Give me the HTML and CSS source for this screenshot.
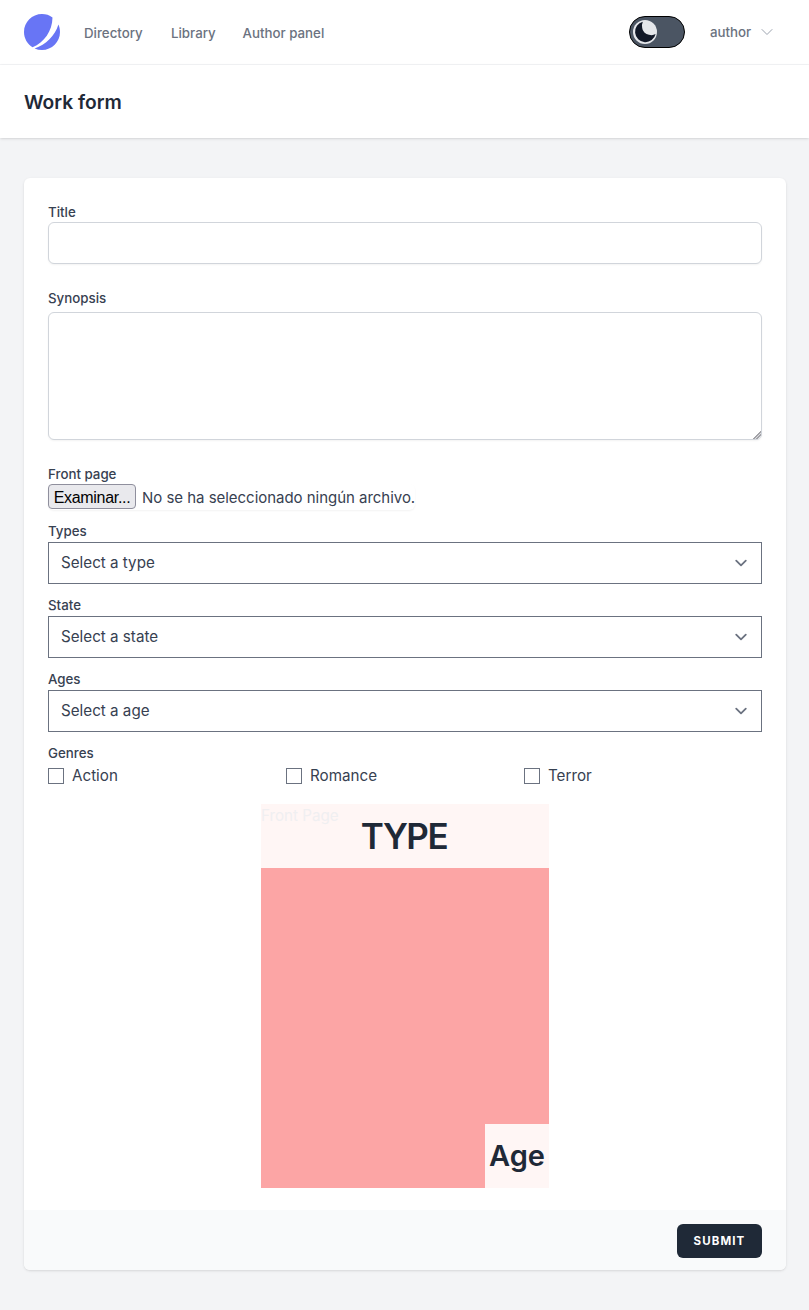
FILE: index.html
```html
<!DOCTYPE html>
<html lang="en">
<head>
<meta charset="utf-8">
<title>Work form</title>
<link rel="stylesheet" href="styles.css">
</head>
<body>
<nav class="nav">
  <svg class="logo" viewBox="0 0 48 48" fill="#6875f5"><path d="M11.395 44.428C4.557 40.198 0 32.632 0 24 0 10.745 10.745 0 24 0a23.891 23.891 0 0113.997 4.502c-.2 17.907-11.097 33.245-26.602 39.926z"/><path d="M14.134 45.885A23.914 23.914 0 0024 48c13.255 0 24-10.745 24-24 0-3.516-.756-6.856-2.115-9.866-4.659 15.143-16.608 27.092-31.75 31.751z"/></svg>
  <div class="links"><a class="link-directory">Directory</a><a class="link-library">Library</a><a class="link-author">Author panel</a></div>
  <button class="toggle" aria-label="Dark mode"><svg class="moon" viewBox="0 0 24 24"><circle cx="12" cy="12" r="12" fill="#e5e7eb"/><path d="M9.800 1.700A10.400 10.400 0 1 0 22.600 14.100A8.400 8.400 0 0 1 16 14.700A7.400 7.400 0 0 1 9.200 8A10 10 0 0 1 9.800 1.700z" fill="#111827"/></svg></button>
  <button class="user"><span>author</span><svg viewBox="0 0 24 24" fill="none" stroke="currentColor" stroke-width="1.5" stroke-linecap="round" stroke-linejoin="round"><path d="M19.500 8.250l-7.500 7.500-7.500-7.500"/></svg></button>
</nav>
<header class="header"><h2>Work form</h2></header>
<main class="main">
  <form class="card">
    <div class="fields">
      <label class="label l-title">Title</label>
      <input class="input" type="text">
      <label class="label l-synopsis">Synopsis</label>
      <textarea class="textarea"></textarea>
      <label class="label l-front">Front page</label>
      <div class="file"><button type="button" class="browse">Examinar...</button><span class="file-name">No se ha seleccionado ningún archivo.</span></div>
      <label class="label l-types">Types</label>
      <div class="select"><span>Select a type</span><svg viewBox="0 0 20 20"><path d="M6 8l4 4 4-4"/></svg></div>
      <label class="label l-state">State</label>
      <div class="select"><span>Select a state</span><svg viewBox="0 0 20 20"><path d="M6 8l4 4 4-4"/></svg></div>
      <label class="label l-ages">Ages</label>
      <div class="select"><span>Select a age</span><svg viewBox="0 0 20 20"><path d="M6 8l4 4 4-4"/></svg></div>
      <label class="label l-genres">Genres</label>
      <div class="genres">
        <label class="genre"><input type="checkbox"><span>Action</span></label>
        <label class="genre"><input type="checkbox"><span>Romance</span></label>
        <label class="genre"><input type="checkbox"><span>Terror</span></label>
      </div>
      <div class="cover">
        <div class="cover-type"><span class="cover-alt">Front Page</span><span class="type-text">TYPE</span></div>
        <div class="cover-age"><span>Age</span></div>
      </div>
    </div>
    <div class="actions"><button type="button" class="submit">Submit</button></div>
  </form>
</main>
</body>
</html>
```
FILE: styles.css
```css
* { box-sizing: border-box; margin: 0; padding: 0; }
body { background: #f3f4f6; color: #374151; font: 400 15.2px/24px Inter, "Liberation Sans", sans-serif; }
button, input, textarea { font: inherit; }
button { border: 0; background: none; }
.nav { display: flex; align-items: center; height: 65px; padding: 0 35px 1px 24px; background: #fff; border-bottom: 1px solid #f3f4f6; }
.logo { width: 36px; height: 36px; }
.links { display: flex; gap: 28px; margin-left: 24px; padding-top: 3px; color: #6b7280; font-size: 13.3px; font-weight: 480; line-height: 20px; white-space: nowrap; }
.link-directory { width: 59px; }
.link-library { width: 43.5px; }
.toggle { display: flex; align-items: center; width: 56px; height: 32px; margin-left: auto; padding-left: 3px; border: 1px solid #000; border-radius: 16px; background: #4b5563; }
.moon { width: 24px; height: 24px; }
.user { display: flex; align-items: center; justify-content: space-between; width: 64px; margin-left: 25px; color: #6b7280; font-size: 13.3px; font-weight: 480; line-height: 20px; }
.user svg { width: 16px; height: 16px; margin-right: -1px; color: #9ca3af; }
.header { position: relative; height: 73px; padding: 25px 24px; background: #fff; box-shadow: 0 1px 3px rgba(0,0,0,.1), 0 1px 2px -1px rgba(0,0,0,.1); }
.header h2 { color: #1f2937; font-size: 19.2px; font-weight: 580; line-height: 25px; }
.main { padding: 40px 23px 40px 24px; }
.card { overflow: hidden; border-radius: 6px; background: #fff; box-shadow: 0 1px 3px rgba(0,0,0,.1), 0 1px 2px -1px rgba(0,0,0,.1); }
.fields { display: flex; flex-direction: column; height: 1032px; padding: 24px; }
.fields > * { flex-shrink: 0; }
.label { font-size: 13.3px; font-weight: 480; line-height: 20px; }
.input, .textarea { width: 100%; border: 1px solid #d1d5db; border-radius: 6px; background: #fff; box-shadow: 0 1px 2px rgba(0,0,0,.05); }
.input { height: 42px; }
.textarea { height: 128px; margin-top: 4px; }
.textarea::-webkit-resizer { background: linear-gradient(135deg, transparent 72%, #a3a3a8 72%, #a3a3a8 77%, #dedee2 77%, #dedee2 82%, #a3a3a8 82%, #a3a3a8 87%, transparent 87%); }
.l-synopsis, .l-front { margin-top: 24px; }
.file { display: flex; align-self: flex-start; width: 367px; height: 26px; border-radius: 6px; box-shadow: 0 1px 2px rgba(0,0,0,.05); white-space: nowrap; }
.browse { flex: none; width: 88px; height: 25px; border: 1px solid #8f8f9d; border-radius: 4px; background: #e9e9ed; color: #000; font: 16px/25px "Liberation Sans", sans-serif; letter-spacing: -.3px; }
.file-name { margin-left: 6px; font-size: 15px; line-height: 27px; letter-spacing: -.03px; }
.l-types, .l-state, .l-ages, .l-genres { margin: 11px 0 1px; }
.select { display: flex; align-items: center; justify-content: space-between; height: 42px; padding: 0 8px 0 12px; border: 1px solid #6b7280; }
.select svg { width: 24px; height: 24px; fill: none; stroke: #6b7280; stroke-width: 1.5; stroke-linecap: round; stroke-linejoin: round; }
.genres { display: grid; grid-template-columns: repeat(3, 1fr); height: 24px; }
.genre { display: flex; align-items: center; gap: 8px; }
.genre input { appearance: none; width: 16px; height: 16px; border: 1px solid #6b7280; background: #fff; }
.cover { display: flex; flex-direction: column; align-self: center; align-items: flex-end; justify-content: space-between; width: 288px; height: 384px; margin-top: 16px; background: #fca5a5; color: #1f2937; font-weight: 600; }
.cover-type { position: relative; display: flex; align-items: center; justify-content: center; width: 100%; height: 64px; padding: 0 2px 1px 0; background: #fff6f5; font-size: 35px; line-height: 40px; letter-spacing: -1.5px; }
.cover-alt { position: absolute; top: 0; left: 0; color: #f0eff1; font-size: 15.2px; font-weight: 400; line-height: 24px; letter-spacing: 0; }
.cover-age { display: flex; align-items: center; justify-content: center; width: 64px; height: 64px; background: #fff6f5; font-size: 29px; line-height: 36px; }
.actions { display: flex; align-items: center; justify-content: flex-end; height: 60px; padding: 2px 24px 0; background: #f9fafb; }
.submit { width: 85px; height: 34px; border-radius: 6px; background: #1f2937; color: #fff; font-size: 11.5px; font-weight: 650; line-height: 16px; letter-spacing: 1.1px; text-transform: uppercase; }
```
